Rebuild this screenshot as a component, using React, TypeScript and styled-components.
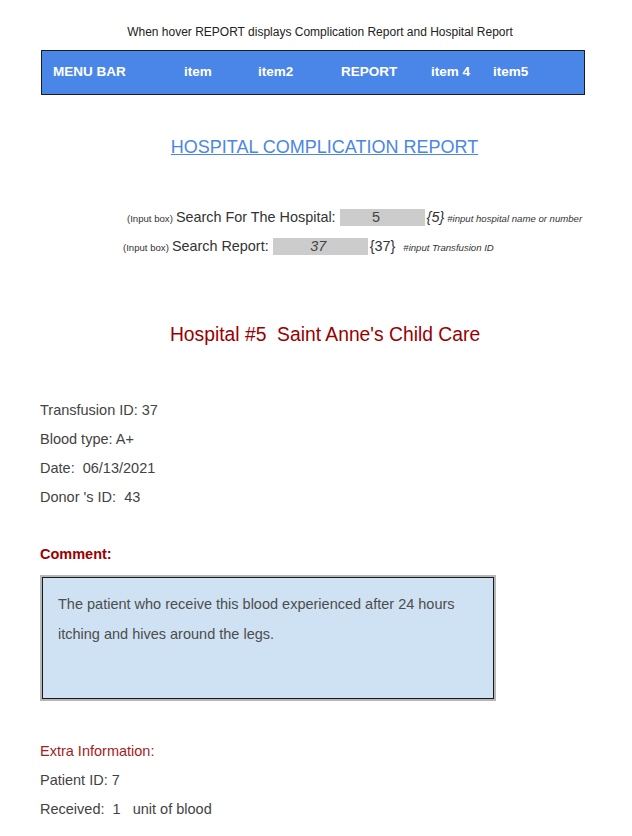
import React from "react";
import styled, { createGlobalStyle } from "styled-components";

const Global = createGlobalStyle`
  html, body { margin: 0; padding: 0; background: #ffffff; }
  body { font-family: "Liberation Sans", Arial, sans-serif; }
`;

const Page = styled.div`
  width: 632px;
  padding-top: 24px;
  display: flex;
  flex-direction: column;
`;

const Note = styled.div`
  font-size: 12px;
  line-height: 16px;
  color: #222;
  text-align: center;
  padding-left: 8px;
`;

const MenuBar = styled.nav`
  margin: 10px 0 0 41px;
  width: 544px;
  height: 45px;
  box-sizing: border-box;
  border: 1px solid #1c1c1c;
  background: #4a86e8;
  display: grid;
  grid-template-columns: 131px 74px 83px 90px 62px auto;
  align-items: center;
  padding-left: 11px;
  padding-bottom: 2px;
`;

const MenuItem = styled.span`
  color: #ffffff;
  font-weight: bold;
  font-size: 13.5px;
`;

const Title = styled.h1`
  margin: 41px 0 0;
  font-size: 18px;
  line-height: 22px;
  font-weight: normal;
  color: #4a86e8;
  text-align: center;
  padding-left: 17px;
  a { color: inherit; text-decoration: underline; }
`;

const SearchList = styled.div`
  margin-top: 49px;
  display: flex;
  flex-direction: column;
  gap: 9px;
`;

const SearchRow = styled.div<{ $indent: number }>`
  display: flex;
  align-items: center;
  height: 20px;
  padding-left: ${(p) => p.$indent}px;
  color: #333;
  white-space: pre;
`;

const Small = styled.span`
  font-size: 9.6px;
  margin-right: 3px;
  margin-top: 2px;
`;

const Label = styled.span`
  font-size: 14.4px;
  margin-right: 4px;
`;

const InputBox = styled.span<{ $w: number; $italic?: boolean }>`
  display: inline-flex;
  align-items: center;
  justify-content: center;
  width: ${(p) => p.$w}px;
  height: 17px;
  background: #cccccc;
  font-size: 14.4px;
  color: #434343;
  font-style: ${(p) => (p.$italic ? "italic" : "normal")};
  padding-right: ${(p) => (p.$italic ? 4 : 12)}px;
  box-sizing: border-box;
`;

const Echo = styled.span<{ $italic?: boolean }>`
  font-size: 14.4px;
  margin-left: 2px;
  font-style: ${(p) => (p.$italic ? "italic" : "normal")};
`;

const Hint = styled.span<{ $gap: number }>`
  font-size: 9.6px;
  font-style: italic;
  margin-left: ${(p) => p.$gap}px;
  margin-top: 2px;
`;

const Hospital = styled.h2`
  margin: 67px 0 0;
  font-size: 19.3px;
  line-height: 24px;
  font-weight: normal;
  color: #990000;
  text-align: center;
  padding-left: 18px;
  white-space: pre;
`;

const Details = styled.div<{ $top: number }>`
  margin-top: ${(p) => p.$top}px;
  padding-left: 40px;
  display: flex;
  flex-direction: column;
`;

const Line = styled.div<{ $tone?: "red" }>`
  font-size: 14.5px;
  line-height: 29px;
  color: ${(p) => (p.$tone === "red" ? "#a61c1c" : "#434343")};
  white-space: pre;
`;

const CommentLabel = styled.div`
  margin-top: 32px;
  padding-left: 40px;
  font-size: 14.5px;
  line-height: 20px;
  font-weight: bold;
  color: #990000;
`;

const CommentFrame = styled.div`
  margin: 11px 0 0 40px;
  width: 456px;
  height: 126px;
  box-sizing: border-box;
  border: 2px solid #b7b7b7;
`;

const CommentBox = styled.div`
  height: 100%;
  box-sizing: border-box;
  border: 1px solid #1a1a1a;
  background: #cfe2f3;
  padding: 11px 0 0 15px;
  font-size: 14.5px;
  line-height: 30px;
  color: #4d4d4d;
`;

export default function App() {
  return (
    <>
      <Global />
      <Page>
        <Note>When hover REPORT displays Complication Report and Hospital Report</Note>
        <MenuBar>
          <MenuItem>MENU BAR</MenuItem>
          <MenuItem>item</MenuItem>
          <MenuItem>item2</MenuItem>
          <MenuItem>REPORT</MenuItem>
          <MenuItem>item 4</MenuItem>
          <MenuItem>item5</MenuItem>
        </MenuBar>
        <Title>
          <a>HOSPITAL COMPLICATION REPORT</a>
        </Title>
        <SearchList>
          <SearchRow $indent={127}>
            <Small>(Input box)</Small>
            <Label>Search For The Hospital:</Label>
            <InputBox $w={85}>5</InputBox>
            <Echo $italic>{"{5}"}</Echo>
            <Hint $gap={3}>#input hospital name or number</Hint>
          </SearchRow>
          <SearchRow $indent={123}>
            <Small>(Input box)</Small>
            <Label>Search Report:</Label>
            <InputBox $w={95} $italic>37</InputBox>
            <Echo>{"{37}"}</Echo>
            <Hint $gap={8}>#input Transfusion ID</Hint>
          </SearchRow>
        </SearchList>
        <Hospital>{"Hospital #5  Saint Anne's Child Care"}</Hospital>
        <Details $top={49}>
          <Line>Transfusion ID: 37</Line>
          <Line>Blood type: A+</Line>
          <Line>{"Date:  06/13/2021"}</Line>
          <Line>{"Donor 's ID:  43"}</Line>
        </Details>
        <CommentLabel>Comment:</CommentLabel>
        <CommentFrame>
          <CommentBox>
            The patient who receive this blood experienced after 24 hours
            <br />
            itching and hives around the legs.
          </CommentBox>
        </CommentFrame>
        <Details $top={36}>
          <Line $tone="red">Extra Information:</Line>
          <Line>Patient ID: 7</Line>
          <Line>{"Received:  1   unit of blood"}</Line>
        </Details>
      </Page>
    </>
  );
}
